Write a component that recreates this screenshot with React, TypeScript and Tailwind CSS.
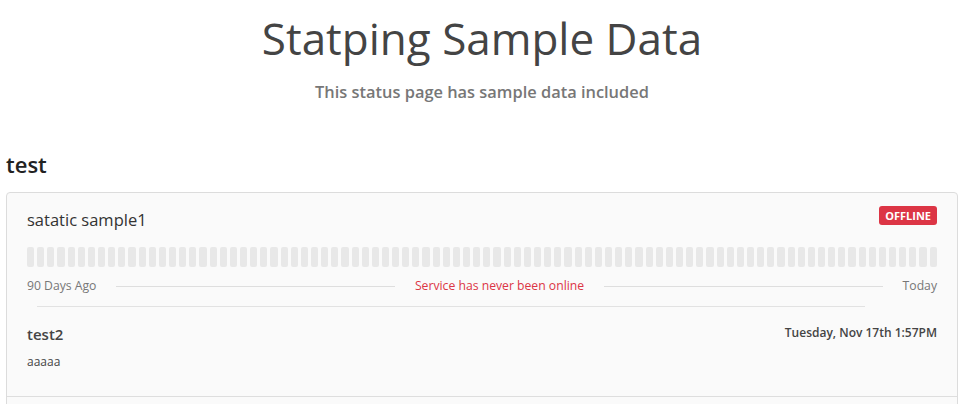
import React from "react";

export default function App() {
  const bars = Array.from({ length: 90 }, (_, i) => i);
  return (
    <div className="min-h-screen bg-white font-['Open_Sans',sans-serif]">
      <div className="ml-[6px] w-[952px]">
        <div className="pt-[6px] text-center">
          <h1 className="text-[44px] leading-[64px] text-[#444] font-normal">Statping Sample Data</h1>
          <p className="mt-[10px] text-[16.4px] leading-[24px] font-semibold text-[#777]">This status page has sample data included</p>
        </div>
        <h2 className="mt-[45px] text-[22px] leading-[30px] font-semibold text-[#222]">test</h2>
        <div className="mt-[13px] rounded-t-[4px] border border-[#dcdcdc] bg-[#fafafa]">
          <div className="px-[20px] pt-[14px]">
            <div className="flex items-start justify-between">
              <span className="text-[16.5px] leading-[26px] text-[#333]">satatic sample1</span>
              <span className="-mt-[1px] rounded-[3px] bg-[#dc3545] px-[6px] py-[2px] text-[11px] font-bold leading-[15px] text-white">OFFLINE</span>
            </div>
            <div className="mt-[14px] flex gap-[3px]">
              {bars.map((b) => (
                <div key={b} className="h-[20px] flex-1 rounded-[2px] bg-[#e8e8e8]" />
              ))}
            </div>
            <div className="mt-[9px] flex items-center gap-[20px] text-[12.2px] leading-[20px]">
              <span className="text-[#777]">90 Days Ago</span>
              <div className="h-px flex-1 bg-[#dedede]" />
              <span className="text-[#dc3545]">Service has never been online</span>
              <div className="h-px flex-1 bg-[#dedede]" />
              <span className="text-[#777]">Today</span>
            </div>
          </div>
          <div className="mt-[10px] ml-[30px] mr-[92px] h-px bg-[#e2e2e2]" />
          <div className="px-[20px] pt-[16px] pb-[25px]">
            <div className="flex items-start justify-between">
              <span className="text-[15px] leading-[22px] font-semibold text-[#444]">test2</span>
              <span className="text-[12px] leading-[20px] font-semibold text-[#444]">Tuesday, Nov 17th 1:57PM</span>
            </div>
            <div className="mt-[8px] text-[12px] leading-[18px] text-[#444]">aaaaa</div>
          </div>
          <div className="h-px bg-[#dedede]" />
          <div className="h-[40px]" />
        </div>
      </div>
    </div>
  );
}
